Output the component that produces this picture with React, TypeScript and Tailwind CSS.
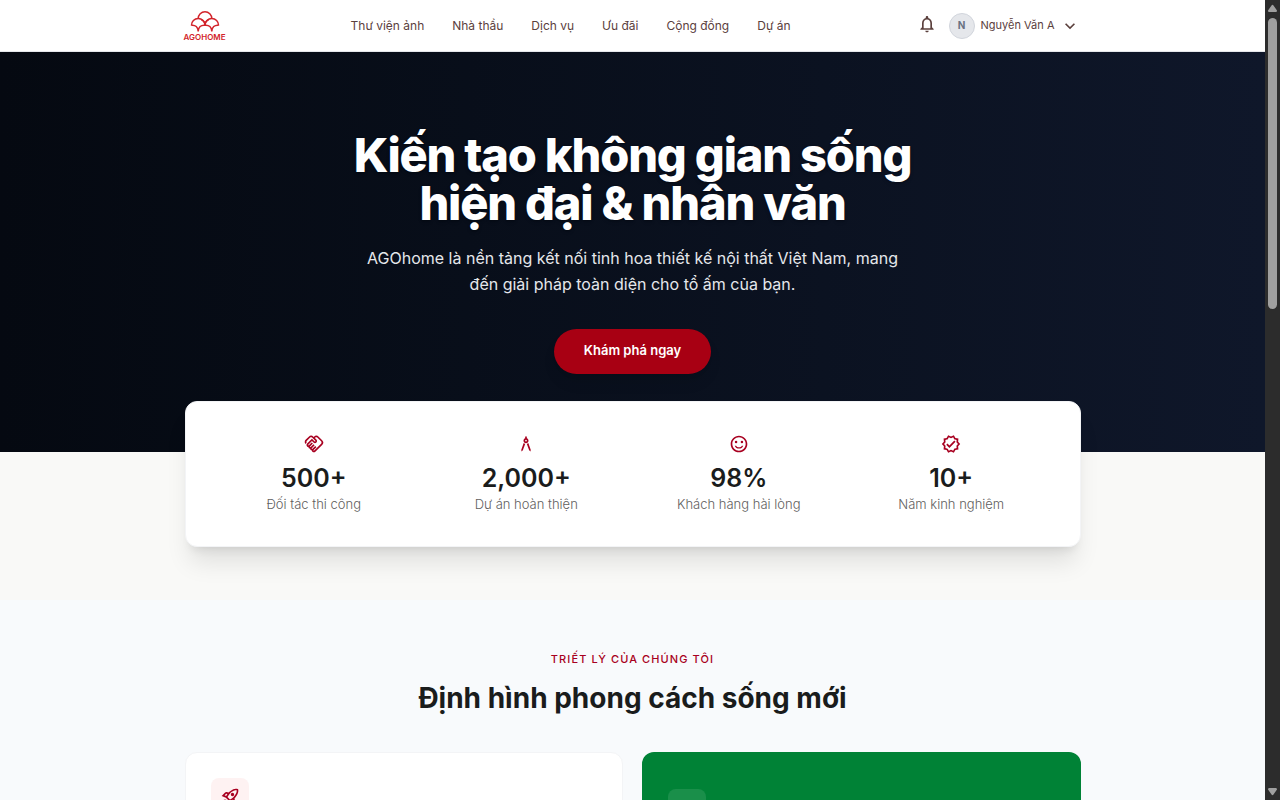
import React from 'react';
import {
  MdOutlineArchitecture,
  MdOutlineExpandMore,
  MdOutlineHandshake,
  MdOutlineNotifications,
  MdOutlineRocketLaunch,
  MdOutlineSentimentSatisfiedAlt,
  MdOutlineVerified,
} from 'react-icons/md';
import type { IconType } from 'react-icons';

const NAV_ITEMS = ['Thư viện ảnh', 'Nhà thầu', 'Dịch vụ', 'Ưu đãi', 'Cộng đồng', 'Dự án'];

interface Stat {
  icon: IconType;
  value: string;
  label: string;
}

const STATS: Stat[] = [
  { icon: MdOutlineHandshake, value: '500+', label: 'Đối tác thi công' },
  { icon: MdOutlineArchitecture, value: '2,000+', label: 'Dự án hoàn thiện' },
  { icon: MdOutlineSentimentSatisfiedAlt, value: '98%', label: 'Khách hàng hài lòng' },
  { icon: MdOutlineVerified, value: '10+', label: 'Năm kinh nghiệm' },
];

function Logo() {
  return (
    <a href="#" className="flex w-10 flex-col items-center text-[#d2232a]">
      <svg width="30" height="22" viewBox="0 0 30 22" fill="none" stroke="currentColor" strokeWidth="1.5">
        <path d="M8.2 7.6a6.8 6.8 0 0 1 13.6 0" />
        <path d="M1.4 14.4a6.8 6.8 0 0 1 13.6 0" />
        <path d="M15 14.4a6.8 6.8 0 0 1 13.6 0" />
        <path d="M1.4 14.2c4-.5 6.8 2 6.8 6.4c0-4.4 2.8-6.9 6.8-6.4c4-.5 6.8 2 6.8 6.4c0-4.4 2.8-6.9 6.8-6.4" />
        <path d="M11.4 8.8c2.2.8 3.6 2.6 3.6 5.4c0-2.8 1.4-4.6 3.6-5.4" />
      </svg>
      <span className="text-[8px] leading-[8px] font-semibold">AGOHOME</span>
    </a>
  );
}

function Header() {
  return (
    <header className="border-b border-gray-200 bg-white">
      <div className="mx-auto flex h-[51px] max-w-4xl items-center justify-between">
        <Logo />
        <nav className="flex gap-7 text-xs text-[#5b403d]">
          {NAV_ITEMS.map((item) => (
            <a key={item} href="#" className="whitespace-nowrap">
              {item}
            </a>
          ))}
        </nav>
        <div className="flex items-center text-[#5b403d]">
          <button type="button" aria-label="Thông báo" className="mr-3 mb-1">
            <MdOutlineNotifications size={20} />
          </button>
          <button type="button" className="flex items-center">
            <span className="flex size-[26px] items-center justify-center rounded-full border border-gray-300 bg-gray-200 text-[10px] font-bold text-gray-500">
              N
            </span>
            <span className="mx-1.5 text-[11px] whitespace-nowrap">Nguyễn Văn A</span>
            <MdOutlineExpandMore size={20} />
          </button>
        </div>
      </div>
    </header>
  );
}

function Hero() {
  return (
    <section className="flex h-[400px] flex-col items-center justify-center bg-linear-to-r from-[#050911] to-[#0f172a] text-center text-white">
      <h1 className="text-[47px] leading-[48px] font-extrabold tracking-tight text-shadow-md">
        Kiến tạo không gian sống
        <br />
        hiện đại &amp; nhân văn
      </h1>
      <p className="mt-[18px] text-base leading-[26px] text-gray-200">
        AGOhome là nền tảng kết nối tinh hoa thiết kế nội thất Việt Nam, mang
        <br />
        đến giải pháp toàn diện cho tổ ấm của bạn.
      </p>
      <button
        type="button"
        className="mt-8 h-[45px] w-[157px] rounded-full bg-[#a80013] text-[13px] font-semibold shadow-lg"
      >
        Khám phá ngay
      </button>
    </section>
  );
}

function StatsCard() {
  return (
    <section className="flow-root bg-[#f9f9f7] pb-[53px]">
      <div className="relative mx-auto -mt-[51px] grid max-w-4xl grid-cols-4 gap-5 rounded-xl border border-gray-100 bg-white p-8 shadow-xl">
        {STATS.map(({ icon: Icon, value, label }) => (
          <div key={label} className="flex flex-col items-center">
            <Icon size={20} className="text-[#a80020]" />
            <p className="mt-2 text-[25px] leading-8 font-semibold text-[#1a1c1c]">{value}</p>
            <p className="text-[13px] leading-5 font-light text-[#5f5e5e]">{label}</p>
          </div>
        ))}
      </div>
    </section>
  );
}

function Philosophy() {
  return (
    <section className="bg-[#f8fafc] pt-[50px]">
      <div className="mx-auto max-w-4xl">
        <p className="text-center text-[11px] leading-[18px] font-medium tracking-widest text-[#a80020] uppercase">
          Triết lý của chúng tôi
        </p>
        <h2 className="mt-3 text-center text-[28px] leading-9 font-bold text-[#1a1c1c]">
          Định hình phong cách sống mới
        </h2>
        <div className="mt-9 grid grid-cols-2 gap-[19px]">
          <article className="h-56 rounded-xl border border-gray-100 bg-white p-[25px]">
            <div className="flex size-[38px] items-center justify-center rounded-lg bg-red-50 text-[#a80020]">
              <MdOutlineRocketLaunch size={20} />
            </div>
          </article>
          <article className="h-56 rounded-xl bg-[#008236] px-[26px] pt-[37px]">
            <div className="size-[38px] rounded-lg bg-white/10" />
          </article>
        </div>
      </div>
    </section>
  );
}

function Scrollbar() {
  return (
    <aside className="flex w-[15px] shrink-0 flex-col items-center justify-between bg-[#2c2c2c] py-1 text-[#9f9f9f]">
      <div className="flex flex-col items-center gap-1.5">
        <svg width="9" height="8" viewBox="0 0 9 8" fill="currentColor">
          <path d="M3.5 1.5q1-1.5 2 0l3.5 5q0 1.5-1 1.5h-7q-1 0-1-1.5z" />
        </svg>
        <div className="h-[291px] w-[9px] rounded-full bg-[#9f9f9f]" />
      </div>
      <svg width="9" height="8" viewBox="0 0 9 8" fill="currentColor">
        <path d="M3.5 6.5q1 1.5 2 0l3.5-5q0-1.5-1-1.5h-7q-1 0-1 1.5z" />
      </svg>
    </aside>
  );
}

export default function App() {
  return (
    <div className="flex h-screen overflow-hidden font-['Inter','Noto_Sans',sans-serif]">
      <main className="min-w-0 flex-1 overflow-hidden">
        <Header />
        <Hero />
        <StatsCard />
        <Philosophy />
      </main>
      <Scrollbar />
    </div>
  );
}
